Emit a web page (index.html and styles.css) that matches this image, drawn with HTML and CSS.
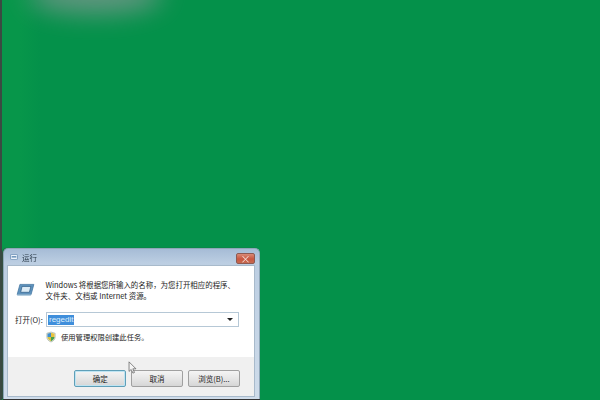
FILE: index.html
```html
<!DOCTYPE html>
<html lang="zh-CN">
<head>
<meta charset="utf-8">
<title>运行</title>
<link rel="stylesheet" href="styles.css">
</head>
<body>
<div class="desktop">
  <div class="edge"></div>
  <div class="glow"></div>
  <div class="window">
    <div class="titlebar">
      <svg class="title-icon" viewBox="0 0 10 8"><rect x="0.5" y="0.5" width="9" height="7" rx="1" fill="#eef4fa" stroke="#5f86ad"/><rect x="2" y="3" width="6" height="1.6" fill="#4a79a8"/></svg>
      <span class="title">运行</span>
      <div class="close"><span>×</span></div>
    </div>
    <div class="client">
      <div class="main">
        <div class="intro">
          <svg class="run-icon" viewBox="0 0 20 14"><path d="M4 1.5H19L16 12.5H1Z" fill="#5f93bd" stroke="#3f739f" stroke-width="0.8"/><path d="M6.300 3.700H15.800L14.200 10H4.800Z" fill="#dcebf5" stroke="#2f5f88" stroke-width="0.8"/><path d="M1 12.5H16L15.600 13.600H1.200Z" fill="#9fc0d8"/></svg>
          <p class="desc">Windows 将根据您所输入的名称，为您打开相应的程序、<br>文件夹、文档或 Internet 资源。</p>
        </div>
        <div class="open-row">
          <label class="open-label">打开(O):</label>
          <div class="combo">
            <span class="selected">regedit</span>
            <span class="arrow"></span>
          </div>
        </div>
        <div class="admin-row">
          <svg class="shield" viewBox="0 0 12 13"><path d="M6 .5 11 2v4.500c0 3-2.300 5-5 6-2.700-1-5-3-5-6V2Z" fill="#e8e8dc" stroke="#8a9a8a" stroke-width=".6"/><path d="M6 1.500V6.500H1.800V2.700Z" fill="#3f8fd0"/><path d="M6 1.500 10.200 2.700V6.500H6Z" fill="#e9c13c"/><path d="M1.800 6.500H6V11.500C4 10.700 2 9 1.800 6.500Z" fill="#d9c23f"/><path d="M6 6.500H10.200C10 9 8 10.700 6 11.500Z" fill="#4aa04a"/></svg>
          <span class="admin-text">使用管理权限创建此任务。</span>
        </div>
      </div>
      <div class="footer">
        <button class="btn default">确定</button>
        <button class="btn">取消</button>
        <button class="btn">浏览(B)...</button>
      </div>
    </div>
  </div>
  <svg class="cursor" viewBox="0 0 10 15"><path d="M1 1V12L3.500 9.800 5.500 14 7.300 13.200 5.400 9H9Z" fill="#f4f4f4" stroke="#555" stroke-width=".8"/></svg>
</div>
</body>
</html>
```
FILE: styles.css
```css
* { box-sizing: border-box; }
html, body { margin: 0; padding: 0; }
body { width: 600px; height: 400px; overflow: hidden; font-family: "Noto Sans CJK SC", "Liberation Sans", sans-serif; }
.desktop { position: relative; width: 600px; height: 400px; background: linear-gradient(90deg, #07964a 0, #07964a 20px, #04914a 40px); overflow: hidden; }
.edge { position: absolute; left: 0; top: 0; width: 2px; height: 400px; background: #3a4a42; }
.glow { position: absolute; left: 28px; top: -24px; width: 135px; height: 38px; border-radius: 50%; background: #7b978f; opacity: .8; filter: blur(13px); }
.window { position: absolute; left: 3px; top: 248px; width: 257px; height: 151px; padding: 0 4px 2px 3px; display: flex; flex-direction: column; background: linear-gradient(#a6bcd6, #bccee2 14px, #cfdcea); border: 1px solid #8fa6b8; border-bottom: 0; border-radius: 5px 5px 0 0; box-shadow: 0 1px 0 #333, -1px 0 1px #3a4a42; filter: blur(0.45px); }
.titlebar { flex: 0 0 16px; display: flex; align-items: center; padding-left: 3px; position: relative; }
.title-icon { width: 8px; height: 6px; }
.title { font-size: 7.5px; color: #2a3a48; margin-left: 4px; }
.close { position: absolute; right: 0; top: 4px; width: 19px; height: 11px; background: linear-gradient(#d98a76, #c9563f 55%, #c76a50); border: 1px solid #8d5a52; border-radius: 2px; display: flex; align-items: center; justify-content: center; color: #f3e0da; font-size: 10px; line-height: 1; }
.client { flex: 1; display: flex; flex-direction: column; background: #fff; border: 1px solid #a8bacb; }
.main { flex: 0 0 91px; padding: 14px 0 0 8px; }
.intro { display: flex; align-items: flex-start; }
.run-icon { width: 19px; height: 13px; margin: 3px 0 0 0; flex: none; }
.desc { margin: 0 0 0 10.500px; font-size: 7.45px; line-height: 10.5px; color: #222; white-space: nowrap; }
.open-row { display: flex; align-items: center; margin: 11px 0 0 -1px; }
.open-label { font-size: 7.5px; color: #222; width: 31px; white-space: nowrap; }
.combo { width: 193px; height: 15px; border: 1px solid #b6c8d6; display: flex; align-items: center; justify-content: space-between; padding: 0 5px 0 1px; background: #fff; }
.selected { background: #3f8edb; color: #dfeefb; font-size: 8px; line-height: 10px; padding: 0 1px; font-family: "Liberation Sans", sans-serif; }
.arrow { width: 0; height: 0; border-left: 3px solid transparent; border-right: 3px solid transparent; border-top: 3px solid #222; }
.admin-row { display: flex; align-items: center; margin: 4px 0 0 30px; }
.shield { width: 10px; height: 12px; }
.admin-text { font-size: 7.3px; color: #222; margin-left: 5px; }
.footer { flex: 1; background: #f0f0f0; display: flex; align-items: flex-start; justify-content: flex-end; gap: 4.500px; padding: 13px 14px 0 0; }
.btn { width: 52.300px; height: 17px; padding: 0; font-family: inherit; font-size: 7.5px; color: #222; border: 1px solid #a0a0a0; border-radius: 2px; background: linear-gradient(#f4f4f4, #e6e6e6 50%, #d6d6d6); }
.default { border-color: #5f9fb8; box-shadow: inset 0 0 0 1px #bfe4f2; }
.cursor { position: absolute; left: 128px; top: 361px; width: 9px; height: 13px; }
```
